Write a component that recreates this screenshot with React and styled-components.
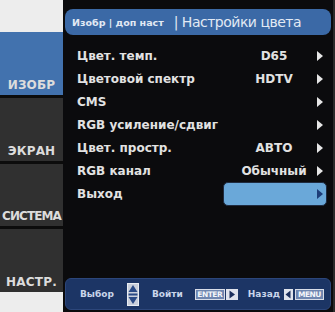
import React from 'react';
import styled, { createGlobalStyle } from 'styled-components';

const GlobalStyle = createGlobalStyle`
  html, body {
    margin: 0;
    padding: 0;
    background: #ededed;
  }
  body {
    font-family: "DejaVu Sans", "Liberation Sans", sans-serif;
  }
`;

const tabs = [
  { name: 'ИЗОБР', active: true },
  { name: 'ЭКРАН' },
  { name: 'СИСТЕМА', tight: true },
  { name: 'НАСТР.' },
];

const rows = [
  { label: 'Цвет. темп.', value: 'D65' },
  { label: 'Цветовой спектр', value: 'HDTV' },
  { label: 'CMS', value: '' },
  { label: 'RGB усиление/сдвиг', value: '' },
  { label: 'Цвет. простр.', value: 'АВТО' },
  { label: 'RGB канал', value: 'Обычный' },
  { label: 'Выход', selected: true },
];

const App = () => {
  return (
    <>
      <GlobalStyle />
      <Screen>
        <Sidebar>
          <Tabs>
            {tabs.map(tab => (
              <Tab key={tab.name} $active={tab.active} $tight={tab.tight}>
                {tab.name}
              </Tab>
            ))}
          </Tabs>
        </Sidebar>
        <Panel>
          <Header>
            <Crumb>Изобр | доп наст</Crumb>
            <Title>|&nbsp;Настройки цвета</Title>
          </Header>
          <List>
            {rows.map(row => (
              <Row key={row.label}>
                <Label>{row.label}</Label>
                {row.selected ? (
                  <Highlight>
                    <Arrow $dark />
                  </Highlight>
                ) : (
                  <>
                    <Value>{row.value}</Value>
                    <ArrowCell>
                      <Arrow />
                    </ArrowCell>
                  </>
                )}
              </Row>
            ))}
          </List>
          <Footer>
            <Hint $after={13}>Выбор</Hint>
            <UpDown>
              <svg width="12" height="23" viewBox="0 0 12 23">
                <rect x="0.5" y="0.5" width="11" height="22" fill="#c9cfdb" stroke="#e8ecf2" />
                <path d="M6 2 L10.5 9 L1.5 9 Z" fill="#2a4a86" />
                <rect x="1.5" y="10.5" width="9" height="2" fill="#2a4a86" />
                <path d="M6 21 L10.5 14 L1.5 14 Z" fill="#2a4a86" />
              </svg>
            </UpDown>
            <Hint $before={13} $after={12}>Войти</Hint>
            <Keys>
              <KeyBox $width={30}>ENTER</KeyBox>
              <ArrowKey>
                <svg width="12" height="11" viewBox="0 0 12 11">
                  <path d="M3.5 1.5 L9 5.5 L3.5 9.5 Z" fill="#1c2f5c" />
                </svg>
              </ArrowKey>
            </Keys>
            <Hint $before={10} $after={4}>Назад</Hint>
            <Keys $gap={2}>
              <ArrowKey $width={9}>
                <svg width="9" height="11" viewBox="0 0 9 11">
                  <path d="M6.5 1.5 L1.5 5.5 L6.5 9.5 Z" fill="#1c2f5c" />
                </svg>
              </ArrowKey>
              <KeyBox $width={29}>MENU</KeyBox>
            </Keys>
          </Footer>
        </Panel>
      </Screen>
    </>
  );
};

export default App;

const Screen = styled.div`
  display: flex;
  width: 335px;
  height: 312px;
  overflow: hidden;
`;

const Sidebar = styled.div`
  width: 63px;
  flex-shrink: 0;
  padding: 32px 0 20px;
  box-sizing: border-box;
  display: flex;
`;

const Tabs = styled.div`
  flex: 1;
  display: flex;
  flex-direction: column;
  gap: 3px;
  background: #0c0c0c;
`;

const Tab = styled.div`
  flex: 1;
  display: flex;
  align-items: flex-end;
  justify-content: center;
  padding-bottom: 3px;
  background: ${p => (p.$active ? '#4272ae' : '#303030')};
  color: #dcdcdc;
  font-size: 12px;
  font-weight: bold;
  letter-spacing: ${p => (p.$tight ? '-0.9px' : '0.2px')};
  white-space: nowrap;
`;

const Panel = styled.div`
  flex: 1;
  min-width: 0;
  display: flex;
  flex-direction: column;
  background: #0b0b0d;
  padding: 9px 2px 2px 2px;
  border-right: 2px solid #2a2a2a;
  box-sizing: border-box;
`;

const Header = styled.div`
  height: 26px;
  border-radius: 8px;
  background: #3b69a6;
  display: flex;
  align-items: center;
  padding-left: 7px;
  gap: 10px;
  color: #e2e9f4;
`;

const Crumb = styled.span`
  font-size: 9.5px;
  font-weight: bold;
`;

const Title = styled.span`
  font-size: 14px;
  letter-spacing: -0.5px;
`;

const List = styled.div`
  flex: 1;
  padding-top: 9px;
  display: flex;
  flex-direction: column;
`;

const Row = styled.div`
  height: 23px;
  display: grid;
  grid-template-columns: 1fr 86px 22px;
  align-items: center;
  padding-left: 12px;
  color: #e2e2e2;
  font-size: 12px;
  font-weight: bold;
`;

const Label = styled.span`
  white-space: nowrap;
`;

const Value = styled.span`
  padding-left: 16px;
  text-align: center;
  white-space: nowrap;
`;

const ArrowCell = styled.span`
  display: flex;
  padding-left: 8px;
`;

const Arrow = styled.span`
  width: 0;
  height: 0;
  border-top: 5px solid transparent;
  border-bottom: 5px solid transparent;
  border-left: 6px solid ${p => (p.$dark ? '#1d3d78' : '#e6e6e6')};
`;

const Highlight = styled.div`
  grid-column: 2 / 4;
  height: 22px;
  margin-right: 4px;
  border: 1px solid #1f2b40;
  border-radius: 5px;
  background: #6aa8d9;
  display: flex;
  align-items: center;
  justify-content: flex-end;
  padding-right: 3px;
`;

const Footer = styled.div`
  height: 30px;
  border-radius: 6px;
  background: #1c3565;
  border: 1px solid #2c467a;
  display: flex;
  align-items: center;
  padding-left: 14px;
  color: #c9d5ea;
  font-size: 9px;
  font-weight: bold;
`;

const Hint = styled.span`
  white-space: nowrap;
  margin-left: ${p => p.$before ?? 0}px;
  margin-right: ${p => p.$after ?? 0}px;
`;

const UpDown = styled.span`
  display: flex;
`;

const Keys = styled.span`
  display: flex;
  align-items: center;
  gap: ${p => p.$gap ?? 1}px;
`;

const KeyBox = styled.span`
  width: ${p => p.$width}px;
  height: 11px;
  box-sizing: border-box;
  border: 1px solid #d8dde8;
  background: #6f86b0;
  color: #f4f6fa;
  font-size: 7.5px;
  font-weight: bold;
  letter-spacing: -0.5px;
  display: flex;
  align-items: center;
  justify-content: center;
`;

const ArrowKey = styled.span`
  width: ${p => p.$width ?? 12}px;
  height: 11px;
  display: flex;
  background: #dfe3ec;
`;
